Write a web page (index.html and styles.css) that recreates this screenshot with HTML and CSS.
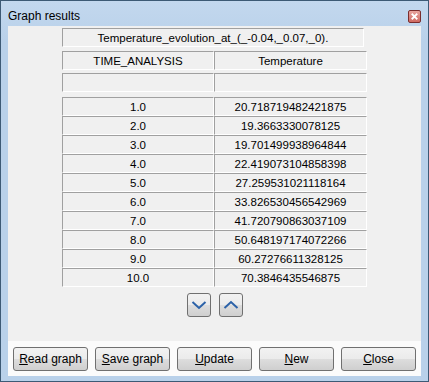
FILE: index.html
```html
<html>

<head>
    <title>Graph results</title>
    <link rel="stylesheet" href="styles.css">
</head>

<body>
    <div class="window">
        <div class="titlebar">
            <span class="caption">Graph results</span>
            <span class="close-x">
                <svg width="13" height="13" viewBox="0 0 13 13">
                    <path d="M4 4 L9 9 M9 4 L4 9" stroke="#fff" stroke-width="2.2" stroke-linecap="square" />
                </svg>
            </span>
        </div>
        <div class="client">
            <div class="field title-field">Temperature_evolution_at_(_-0.04,_0.07,_0).</div>

            <div class="row header-row">
                <div class="field cell">TIME_ANALYSIS</div>
                <div class="field cell">Temperature</div>
            </div>
            <div class="row empty-row">
                <div class="field cell"></div>
                <div class="field cell"></div>
            </div>

            <div class="data">
                <div class="row"><div class="field cell">1.0</div><div class="field cell">20.718719482421875</div></div>
                <div class="row"><div class="field cell">2.0</div><div class="field cell">19.3663330078125</div></div>
                <div class="row"><div class="field cell">3.0</div><div class="field cell">19.701499938964844</div></div>
                <div class="row"><div class="field cell">4.0</div><div class="field cell">22.419073104858398</div></div>
                <div class="row"><div class="field cell">5.0</div><div class="field cell">27.259531021118164</div></div>
                <div class="row"><div class="field cell">6.0</div><div class="field cell">33.826530456542969</div></div>
                <div class="row"><div class="field cell">7.0</div><div class="field cell">41.720790863037109</div></div>
                <div class="row"><div class="field cell">8.0</div><div class="field cell">50.648197174072266</div></div>
                <div class="row"><div class="field cell">9.0</div><div class="field cell">60.27276611328125</div></div>
                <div class="row"><div class="field cell">10.0</div><div class="field cell">70.3846435546875</div></div>
            </div>

            <div class="arrows">
                <button class="arrow">
                    <svg width="16" height="10" viewBox="0 0 16 10">
                        <path d="M1.5 2 L8 8 L14.5 2" fill="none" stroke="#2c62a8" stroke-width="2" />
                    </svg>
                </button>
                <button class="arrow">
                    <svg width="16" height="10" viewBox="0 0 16 10">
                        <path d="M1.5 8 L8 2 L14.5 8" fill="none" stroke="#2c62a8" stroke-width="2" />
                    </svg>
                </button>
            </div>

            <div class="buttons">
                <button class="btn"><u>R</u>ead graph</button>
                <button class="btn"><u>S</u>ave graph</button>
                <button class="btn"><u>U</u>pdate</button>
                <button class="btn"><u>N</u>ew</button>
                <button class="btn"><u>C</u>lose</button>
            </div>
        </div>
    </div>
</body>

</html>
```

FILE: styles.css
```css
body {
    margin: 0;
    padding: 0;
    font-family: "Liberation Sans", Arial, sans-serif;
    font-size: 12px;
    color: #000;
}

.window {
    width: 429px;
    height: 382px;
    box-sizing: border-box;
    border: 1px solid #3d5a75;
    background: linear-gradient(#c3d8ee, #b9d1ea 40px);
    padding: 0 7px 5px 7px;
    display: flex;
    flex-direction: column;
}

.titlebar {
    height: 25px;
    display: flex;
    align-items: center;
    justify-content: space-between;
    flex-shrink: 0;
}

.caption {
    font-size: 12px;
    margin-top: 4px;
    color: #000;
}

.close-x {
    width: 13px;
    height: 13px;
    margin-top: 6px;
    margin-right: 0px;
    border: 1px solid #7a2d2d;
    border-radius: 2px;
    background: linear-gradient(#e8a49e, #cf6a62);
    box-sizing: border-box;
    display: flex;
    align-items: center;
    justify-content: center;
}

.close-x svg {
    width: 11px;
    height: 11px;
}

.client {
    flex: 1;
    background: #f0f0f0;
    display: flex;
    flex-direction: column;
    padding-left: 54px;
}

.field {
    height: 19px;
    box-sizing: border-box;
    border-top: 1px solid #a0a0a0;
    border-left: 1px solid #a0a0a0;
    border-right: 1px solid #fff;
    border-bottom: 1px solid #fff;
    background: #f0f0f0;
    display: flex;
    align-items: center;
    justify-content: center;
    font-size: 11.5px;
    white-space: nowrap;
}

.title-field {
    width: 302px;
    margin-top: 2px;
}

.row {
    display: flex;
}

.cell:first-child {
    width: 152px;
}

.cell:last-child {
    width: 153px;
}

.header-row {
    margin-top: 4px;
}

.empty-row {
    margin-top: 3px;
}

.data {
    margin-top: 5px;
}

.arrows {
    width: 305px;
    display: flex;
    justify-content: center;
    gap: 8px;
    margin-top: 6px;
}

.arrow {
    width: 24px;
    height: 24px;
    padding: 0;
    border: 1px solid #707070;
    border-radius: 3px;
    background: linear-gradient(#f2f2f2 0%, #ebebeb 50%, #dddddd 51%, #cfcfcf 100%);
    display: flex;
    align-items: center;
    justify-content: center;
}

.buttons {
    margin-left: -54px;
    margin-top: auto;
    height: 35px;
    background: #fbfbfb;
    display: flex;
    align-items: center;
    gap: 7px;
    padding-left: 5px;
}

.btn {
    width: 75px;
    height: 24px;
    padding: 0;
    border: 1px solid #707070;
    border-radius: 3px;
    background: linear-gradient(#f2f2f2 0%, #ebebeb 50%, #dddddd 51%, #cfcfcf 100%);
    font-family: "Liberation Sans", Arial, sans-serif;
    font-size: 12px;
    color: #000;
}
```
